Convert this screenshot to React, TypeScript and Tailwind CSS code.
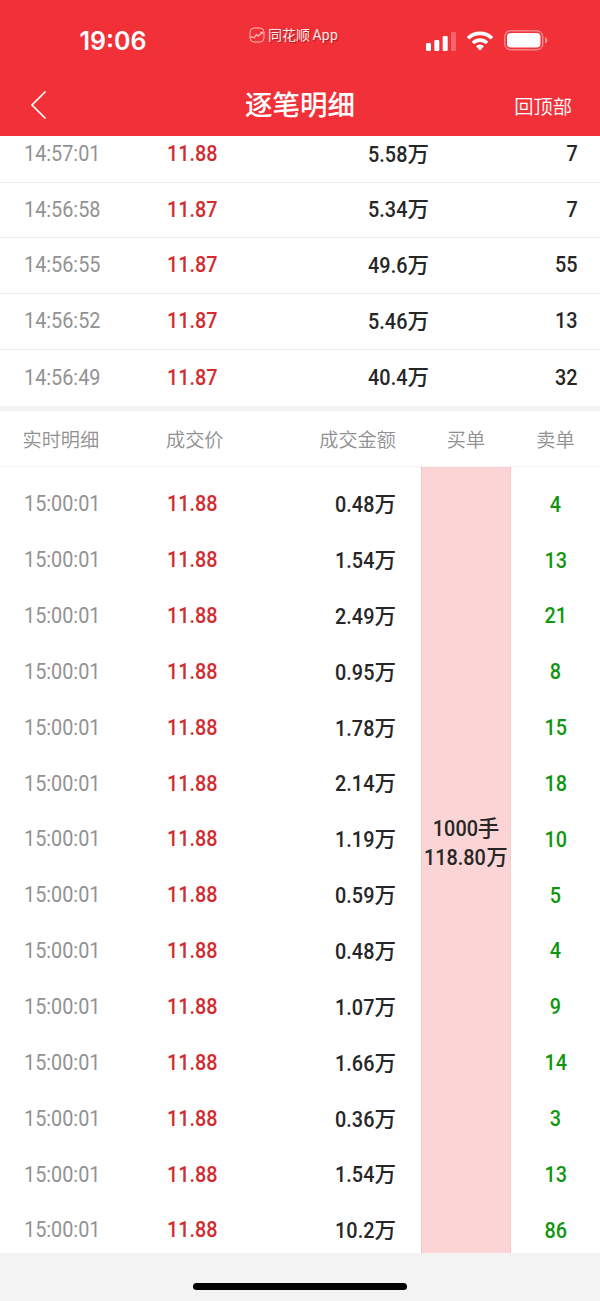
import React from "react";

const topRows = [
  ["14:57:01", "11.88", "5.58", "7"],
  ["14:56:58", "11.87", "5.34", "7"],
  ["14:56:55", "11.87", "49.6", "55"],
  ["14:56:52", "11.87", "5.46", "13"],
  ["14:56:49", "11.87", "40.4", "32"],
];

const liveRows = [
  ["0.48", "4"],
  ["1.54", "13"],
  ["2.49", "21"],
  ["0.95", "8"],
  ["1.78", "15"],
  ["2.14", "18"],
  ["1.19", "10"],
  ["0.59", "5"],
  ["0.48", "4"],
  ["1.07", "9"],
  ["1.66", "14"],
  ["0.36", "3"],
  ["1.54", "13"],
  ["10.2", "86"],
];

function Num({ children, className = "origin-left" }: { children: React.ReactNode; className?: string }) {
  return (
    <span
      className={`inline-block scale-x-[0.885] font-['Roboto',sans-serif] text-[22.4px] leading-none font-medium ${className}`}
    >
      {children}
    </span>
  );
}

function Amount({ value, unit = "万", className = "" }: { value: string; unit?: string; className?: string }) {
  return (
    <span className="flex items-baseline whitespace-nowrap text-[#262626]">
      <Num className={`origin-right ${className}`}>{value}</Num>
      <span className="text-[21.5px] leading-none font-medium">{unit}</span>
    </span>
  );
}

function Time({ value }: { value: string }) {
  return (
    <span className="pt-[1px] pl-[23.500px] text-[#929292] [&>span]:font-[440]">
      <Num>{value}</Num>
    </span>
  );
}

function Price({ value }: { value: string }) {
  return (
    <span className="pt-[1px] pl-[0.500px] text-[#d22c30]">
      <Num className="origin-left">{value}</Num>
    </span>
  );
}

function StatusBar() {
  return (
    <div className="flex h-[74px] items-start text-white">
      <div className="ml-[79.500px] w-[169.500px] pt-[25px] font-['Inter',sans-serif] text-[25px] leading-[32px] font-semibold">
        19:06
      </div>
      <div className="flex w-[177px] items-center gap-[3px] pt-[25px] text-[14px] leading-[18px] text-white/90 [text-shadow:1px_1px_1px_rgba(90,0,0,0.45)]">
        <svg width="16" height="16" viewBox="0 0 16 16" fill="none" stroke="#ffb9b5" strokeWidth="1">
          <rect x="1" y="1" width="14" height="14" rx="4" />
          <path d="M1.500 10.500c1 0 1.500-.5 2-.5s1 .8 1.800.6S6.800 7.500 7.500 7.500s1 1.800 1.800 1.600S11 6.500 13 5.800" strokeWidth="1.300" />
          <circle cx="12.800" cy="5.800" r=".9" fill="#fff" />
        </svg>
        <span className="whitespace-nowrap">
          同花顺<span className="ml-[2.500px] font-['Roboto',sans-serif] text-[14px] tracking-[0.2px]">App</span>
        </span>
      </div>
      <div className="flex items-center gap-[10px] pt-[30px]">
        <svg width="30" height="20" viewBox="0 0 30 20" fill="#fff">
          <rect x="0" y="12" width="5" height="8" rx="1.300" />
          <rect x="8.300" y="9" width="5" height="11" rx="1.300" />
          <rect x="16.700" y="5" width="5" height="15" rx="1.300" />
          <rect x="25" y="1" width="5" height="19" rx="1.300" opacity=".25" />
        </svg>
        <svg width="28" height="20" viewBox="0 0 28 20" fill="none" stroke="#fff" strokeWidth="3.600">
          <path d="M2 7.300a17 17 0 0 1 24 0" />
          <path d="M6.900 12a10.200 10.200 0 0 1 14.200 0" />
          <path d="M14 19.500l-4-4.200a5.600 5.600 0 0 1 8 0z" fill="#fff" stroke="none" />
        </svg>
        <svg width="44" height="21" viewBox="0 0 44 21">
          <rect x=".75" y=".75" width="38" height="19" rx="6" fill="none" stroke="#fff" strokeOpacity=".4" strokeWidth="1.500" />
          <rect x="3" y="3" width="33.500" height="14.500" rx="4" fill="#fff" />
          <path d="M41 7v6.500c1.600-.6 2.400-1.800 2.400-3.250S42.600 7.600 41 7z" fill="#fff" opacity=".45" />
        </svg>
      </div>
    </div>
  );
}

export default function App() {
  return (
    <div className="flex h-[1301px] w-[600px] flex-col overflow-hidden bg-white font-['Noto_Sans_CJK_SC',sans-serif]">
      <header className="h-[136px] shrink-0 bg-[#f23038] text-white">
        <StatusBar />
        <div className="grid h-[62px] grid-cols-[200px_200px_200px] items-center">
          <svg className="ml-[30px]" width="18" height="30" viewBox="0 0 18 30" fill="none" stroke="#fff" strokeWidth="1.700">
            <path d="M15.500 1.500L2 15l13.500 13.500" />
          </svg>
          <h1 className="pb-[2px] text-center text-[27.5px] leading-none font-medium">逐笔明细</h1>
          <span className="pr-[28px] pt-[3px] text-right text-[19.3px] leading-none font-[350]">回顶部</span>
        </div>
      </header>

      <section className="flex h-[270px] shrink-0 flex-col justify-end overflow-hidden">
        {topRows.map(([time, price, amount, lots], i) => (
          <div
            key={time}
            className={`grid h-[55.850px] shrink-0 grid-cols-[166px_142px_121px_148.500px] items-center pb-[2px] ${
              i < 4 ? "border-b border-[#ececec]" : ""
            }`}
          >
            <Time value={time} />
            <Price value={price} />
            <span className="flex justify-end"><Amount value={amount} /></span>
            <span className="pt-[1px] text-right text-[#262626]"><Num className="origin-right">{lots}</Num></span>
          </div>
        ))}
      </section>

      <div className="h-[5px] shrink-0 bg-[#f4f4f4]" />

      <div className="grid h-[56px] shrink-0 grid-cols-[166px_142px_88px_25px_90px_89px] items-center border-b border-[#f5f5f5] pt-[2px] text-[19.200px] leading-none font-[350] text-[#909090]">
        <span className="pl-[22.500px]">实时明细</span>
        <span>成交价</span>
        <span className="flex justify-end whitespace-nowrap">成交金额</span>
        <span />
        <span className="text-center">买单</span>
        <span className="text-center">卖单</span>
      </div>

      <section className="flex h-[786px] shrink-0 overflow-hidden">
        <div className="w-[421px] pt-[9px]">
          {liveRows.map(([amount], i) => (
            <div key={i} className="grid h-[55.850px] grid-cols-[166px_142px_88px] items-center">
              <span className="pt-[1px]"><Time value="15:00:01" /></span>
              <span className="pt-[1px]"><Price value="11.88" /></span>
              <span className="flex justify-end"><Amount value={amount} /></span>
            </div>
          ))}
        </div>
        <div className="flex w-[90px] flex-col items-center justify-center gap-[6px] border-x border-dotted border-[#f0bcc0] bg-[#fbd4d6] pb-[36px]">
          <Amount value="1000" unit="手" className="-ml-[6px]" />
          <Amount value="118.80" className="-ml-[8px]" />
        </div>
        <div className="w-[89px] pt-[9px] text-[#109610]">
          {liveRows.map(([, lots], i) => (
            <div key={i} className="flex h-[55.850px] items-center justify-center">
              <Num className="origin-center">{lots}</Num>
            </div>
          ))}
        </div>
      </section>

      <footer className="flex flex-1 justify-center bg-[#f3f3f3] pt-[30px]">
        <div className="h-[7px] w-[214px] rounded-full bg-black" />
      </footer>
    </div>
  );
}
